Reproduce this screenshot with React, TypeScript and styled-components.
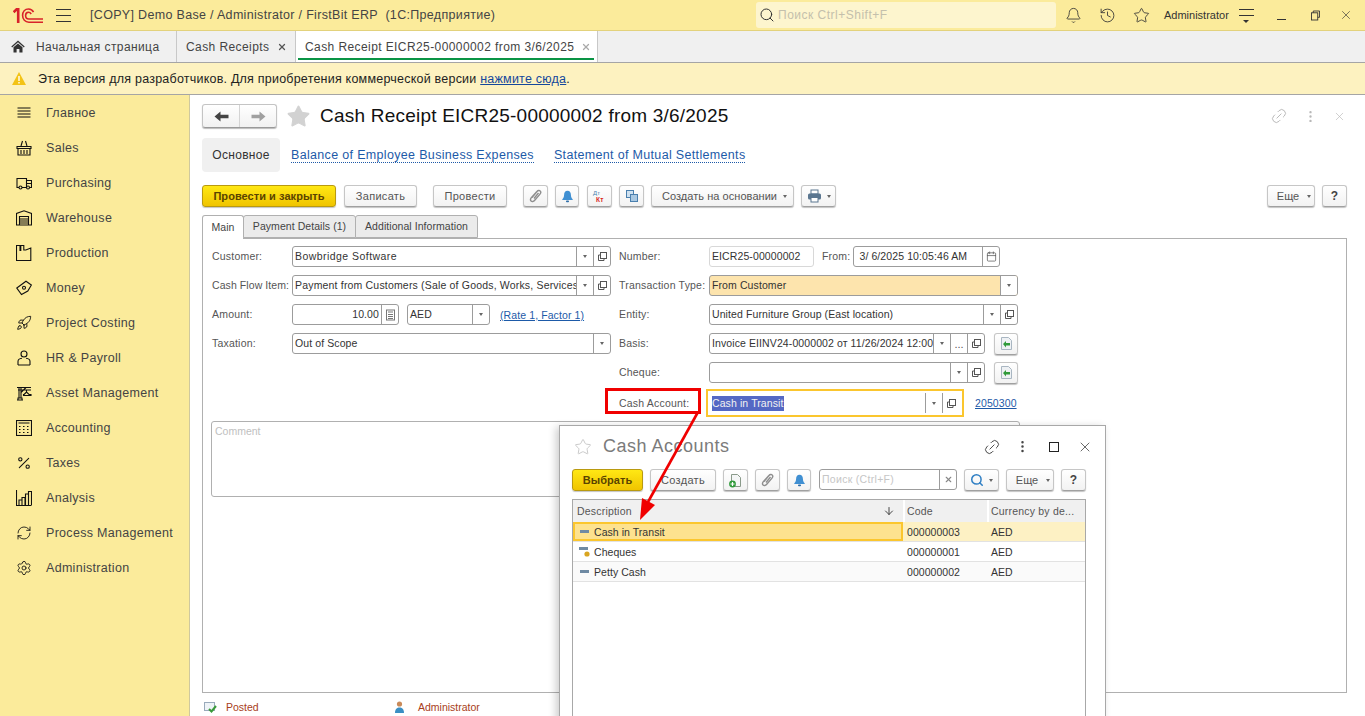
import React from "react";
import styled, { createGlobalStyle } from "styled-components";
import { Rocket, Settings, RefreshCw, Percent, Bell, History, Star, Link2, Search, X, MoreVertical, ArrowDown, Calendar } from "lucide-react";

const GlobalStyle = createGlobalStyle`
  html, body {
    margin: 0;
    padding: 0;
    height: 100%;
    overflow: hidden;
    background: #fff;
  }
  * { box-sizing: border-box; }
`;

const Page = styled.div`
  position: relative;
  width: 1365px;
  height: 716px;
  overflow: hidden;
  font-family: "Liberation Sans", Arial, sans-serif;
  font-size: 11px;
  color: #444;
  display: flex;
  flex-direction: column;
`;

/* top bar */
const TopBar = styled.div`
  height: 31px;
  flex: none;
  background: #fbeb9b;
  border-bottom: 1px solid #e3d27c;
  display: flex;
  align-items: center;
`;
const LogoWrap = styled.div`
  margin-left: 13px;
  width: 30px;
  height: 15px;
  display: flex;
`;
const Burger = styled.div`
  margin-left: 13px;
  width: 15px;
  height: 13px;
  border-top: 1px solid #333;
  border-bottom: 1px solid #333;
  position: relative;
  &::after {
    content: "";
    position: absolute;
    left: 0;
    right: 0;
    top: 5px;
    height: 1px;
    background: #333;
  }
`;
const AppTitle = styled.div`
  margin-left: 19px;
  width: 666px;
  font-size: 12.5px;
  letter-spacing: 0.32px;
  color: #444;
  white-space: pre;
`;
const SearchBox = styled.div`
  width: 300px;
  height: 26px;
  background: #fdf5ce;
  border-radius: 3px;
  display: flex;
  align-items: center;
  padding-left: 3px;
  color: #c4c0ac;
  font-size: 12px;
  letter-spacing: 0.5px;
  gap: 3px;
`;
const TopTool = styled.div`
  width: 34px;
  display: flex;
  justify-content: center;
  color: #333;
  &:first-of-type { margin-left: 2px; }
`;
const TopUser = styled.div`
  margin-left: 4px;
  width: 64px;
  padding-left: 2px;
  font-size: 11px;
  color: #333;
  white-space: nowrap;
`;
const MenuLines = styled.div`
  margin-left: 13px;
  width: 15px;
  height: 13px;
  border-top: 1px solid #333;
  position: relative;
  &::before {
    content: "";
    position: absolute;
    left: 0;
    right: 0;
    top: 5px;
    height: 1px;
    background: #333;
  }
  &::after {
    content: "";
    position: absolute;
    left: 4px;
    top: 10px;
    border-left: 3px solid transparent;
    border-right: 3px solid transparent;
    border-top: 3px solid #333;
  }
`;
const WinMin = styled.div`
  margin-left: 23px;
  width: 9px;
  height: 8px;
  margin-top: 1px;
  border-bottom: 1px solid #333;
`;
const WinRestore = styled.div`
  margin-left: 25px;
  width: 9px;
  display: flex;
`;
const WinClose = styled.div`
  margin-left: 19px;
  display: flex;
  color: #333;
`;

/* open windows */
const TabStrip = styled.div`
  height: 32px;
  flex: none;
  background: #f0f0f0;
  border-bottom: 1px solid #a5a5a5;
  display: flex;
`;
const WinTab = styled.div<{ $w: number; $pl: number; $active?: boolean }>`
  position: relative;
  width: ${(p) => p.$w}px;
  padding-left: ${(p) => p.$pl}px;
  background: ${(p) => (p.$active ? "#fff" : "#f0f0f0")};
  border-right: 1px solid #c8c8c8;
  display: flex;
  align-items: center;
  font-size: 12px;
  letter-spacing: 0.41px;
  color: #444;
  white-space: nowrap;
  &::after {
    content: "";
    display: ${(p) => (p.$active ? "block" : "none")};
    position: absolute;
    left: 2px;
    right: 3px;
    bottom: 2px;
    height: 2px;
    background: #0a9445;
  }
`;
const TabHome = styled.span`
  display: flex;
  margin-right: 11px;
  margin-left: -1px;
`;
const TabClose = styled.span<{ $dim?: boolean }>`
  position: absolute;
  right: ${(p) => (p.$dim ? 6 : 8)}px;
  top: 11px;
  display: flex;
  color: ${(p) => (p.$dim ? "#aaa" : "#555")};
`;

const Notice = styled.div`
  height: 32px;
  flex: none;
  background: #fdf2c0;
  border-bottom: 1px solid #a5a5a5;
  display: flex;
  align-items: center;
  padding-left: 12px;
  font-size: 12.5px;
  letter-spacing: 0.22px;
  color: #222;
`;
const NoticeText = styled.span`
  margin-left: 12px;
`;
const NoticeLink = styled.a`
  color: #14489c;
  text-decoration: underline;
`;

const Body = styled.div`
  flex: 1;
  display: flex;
  min-height: 0;
`;

/* sections */
const Sidebar = styled.div`
  width: 190px;
  flex: none;
  background: #fbeb9b;
  border-right: 1px solid #cfc89e;
`;
const SideItem = styled.div`
  height: 35px;
  display: flex;
  align-items: center;
  padding-left: 16px;
  gap: 14px;
  font-size: 12.5px;
  letter-spacing: 0.3px;
  color: #444;
  white-space: nowrap;
`;
const SideIcon = styled.span`
  width: 16px;
  height: 16px;
  display: flex;
  color: #111;
`;

/* document form */
const Content = styled.div`
  flex: 1;
  padding: 9px 18px 0 12px;
  min-width: 0;
`;
const Header = styled.div`
  height: 24px;
  display: flex;
  align-items: center;
`;
const ArrowGroup = styled.div`
  width: 75px;
  height: 24px;
  display: flex;
  border: 1px solid #c4c4c4;
  border-bottom-color: #999;
  border-radius: 3px;
  background: linear-gradient(#fff, #f1f1f1);
  box-shadow: 0 1px 1px #bbb;
`;
const ArrowCell = styled.div<{ $dim?: boolean }>`
  flex: 1;
  display: flex;
  align-items: center;
  justify-content: center;
  color: ${(p) => (p.$dim ? "#a0a0a0" : "#444")};
  & + & { border-left: 1px solid #d4d4d4; }
`;
const HeadStar = styled.span`
  margin-left: 9px;
  display: flex;
  color: #d2d2d2;
`;
const DocTitle = styled.div`
  margin-left: 9px;
  font-size: 19px;
  letter-spacing: 0.22px;
  color: #111;
  white-space: nowrap;
`;
const HeadRight = styled.div`
  margin-left: auto;
  margin-right: 1px;
  display: flex;
  align-items: center;
  gap: 15px;
  color: #b8b8b8;
`;

const LinksRow = styled.div`
  margin-top: 10px;
  height: 34px;
  display: flex;
  align-items: center;
`;
const CurrentLink = styled.div`
  width: 78px;
  height: 34px;
  background: #f0f0f0;
  border-radius: 4px;
  display: flex;
  align-items: center;
  justify-content: center;
  font-size: 12px;
  letter-spacing: 0.3px;
  color: #333;
`;
const FormLink = styled.a<{ $ml: number }>`
  margin-left: ${(p) => p.$ml}px;
  margin-top: 1px;
  font-size: 12.5px;
  letter-spacing: 0.33px;
  color: #1d5aa8;
  text-decoration: none;
  border-bottom: 1px dotted #1d5aa8;
  line-height: 14px;
`;

const Toolbar = styled.div`
  margin-top: 13px;
  height: 22px;
  display: flex;
`;
const Btn = styled.div<{ $w: number; $ml?: number }>`
  width: ${(p) => p.$w}px;
  height: 22px;
  margin-left: ${(p) => p.$ml ?? 0}px;
  flex: none;
  border: 1px solid #c6c6c6;
  border-bottom-color: #a0a0a0;
  border-radius: 3px;
  background: linear-gradient(#fff, #f2f2f2);
  box-shadow: 0 1px 1px #c4c4c4;
  display: flex;
  align-items: center;
  justify-content: center;
  gap: 5px;
  font-size: 11px;
  letter-spacing: 0.3px;
  color: #555;
  white-space: nowrap;
`;
const PrimaryBtn = styled(Btn)`
  background: linear-gradient(#ffe814, #f0c400);
  border-color: #b99a10;
  color: #5a4400;
  font-weight: bold;
  letter-spacing: 0.05px;
`;
const HelpBtn = styled(Btn)`
  font-weight: bold;
  color: #444;
  font-size: 12px;
`;
const CreateBtn = styled(Btn)`
  letter-spacing: 0.05px;
  gap: 6px;
  padding-left: 4px;
`;
const MoreBtn = styled(Btn)`
  padding-left: 6px;
  gap: 8px;
  letter-spacing: 0;
`;
const BtnCaret = styled.span`
  width: 0;
  height: 0;
  border-left: 2.5px solid transparent;
  border-right: 2.5px solid transparent;
  border-top: 3px solid #666;
`;
const PushRight = styled.div`
  margin-left: auto;
  display: flex;
  gap: 7px;
`;

const TabsRow = styled.div`
  margin-top: 8px;
  height: 24px;
  display: flex;
  position: relative;
  z-index: 1;
`;
const FormTab = styled.div<{ $w: number; $active?: boolean }>`
  width: ${(p) => p.$w}px;
  height: ${(p) => (p.$active ? 24 : 23)}px;
  margin-right: -1px;
  padding-bottom: ${(p) => (p.$active ? 2 : 1)}px;
  background: ${(p) => (p.$active ? "#fff" : "#ebebeb")};
  border: 1px solid #b0b0b0;
  border-bottom: ${(p) => (p.$active ? "none" : "1px solid #b0b0b0")};
  border-radius: 3px 3px 0 0;
  display: flex;
  align-items: center;
  justify-content: center;
  font-size: 10.5px;
  letter-spacing: 0.06px;
  color: #444;
  white-space: nowrap;
`;
const Frame = styled.div`
  margin-top: -1px;
  height: 455px;
  border: 1px solid #b0b0b0;
  padding: 7px 0 0 9px;
`;
const Columns = styled.div`
  display: flex;
  gap: 8px;
`;
const Column = styled.div`
  width: 399px;
  display: flex;
  flex-direction: column;
  gap: 8px;
`;
const Row = styled.div`
  height: 21px;
  display: flex;
  align-items: center;
`;
const HighlightRow = styled(Row)`
  height: 28px;
  margin-top: -2px;
`;
const Label = styled.div<{ $w: number; $ls?: number }>`
  width: ${(p) => p.$w}px;
  flex: none;
  padding-bottom: 1px;
  font-size: 10.5px;
  letter-spacing: ${(p) => p.$ls ?? 0.2}px;
  color: #555;
  white-space: nowrap;
`;
const InlineLabel = styled.span`
  margin: 0 3px 0 8px;
  padding-bottom: 1px;
  font-size: 10.5px;
  letter-spacing: 0.2px;
  color: #555;
`;
const Field = styled.div<{ $w: number; $ml?: number; $bg?: string; $light?: boolean }>`
  width: ${(p) => p.$w}px;
  height: 21px;
  margin-left: ${(p) => p.$ml ?? 0}px;
  flex: none;
  display: flex;
  background: ${(p) => p.$bg ?? "#fff"};
  border: 1px solid ${(p) => (p.$light ? "#d8d8d8" : "#9c9c9c")};
  border-radius: 3px;
  overflow: hidden;
`;
const FieldValue = styled.div<{ $right?: boolean; $ls?: number }>`
  flex: 1;
  min-width: 0;
  padding: 0 2px;
  line-height: 19px;
  font-size: 10.5px;
  letter-spacing: ${(p) => p.$ls ?? 0.1}px;
  color: #333;
  white-space: nowrap;
  overflow: hidden;
  text-align: ${(p) => (p.$right ? "right" : "left")};
`;
const FieldBtn = styled.div<{ $bg?: string }>`
  width: 17px;
  flex: none;
  border-left: 1px solid #9c9c9c;
  background: ${(p) => p.$bg ?? "transparent"};
  display: flex;
  align-items: center;
  justify-content: center;
  color: #555;
`;
const FocusField = styled.div`
  width: 258px;
  height: 28px;
  margin-left: -3px;
  flex: none;
  display: flex;
  align-items: center;
  border: 2px solid #fbc62e;
  padding: 2px 3px 2px 4px;
`;
const Selected = styled.span`
  background: #5468c4;
  color: #f2f2f2;
  line-height: 15px;
  font-size: 10.5px;
  letter-spacing: 0.1px;
`;
const FocusBtns = styled.div`
  margin-left: auto;
  height: 20px;
  display: flex;
`;
const PlainLink = styled.a<{ $ml: number }>`
  margin-left: ${(p) => p.$ml}px;
  font-size: 10.5px;
  letter-spacing: 0.1px;
  color: #1d5aa8;
  text-decoration: underline;
  white-space: nowrap;
`;
const Comment = styled.div`
  margin-top: 4px;
  margin-left: -1px;
  width: 809px;
  height: 76px;
  border: 1px solid #b0b0b0;
  border-radius: 3px;
  padding: 3px;
  font-size: 10.5px;
  color: #c0c0c0;
`;
const StatusBar = styled.div`
  margin-top: 5px;
  height: 18px;
  display: flex;
  align-items: center;
  padding-left: 2px;
  font-size: 10.5px;
  color: #a8401a;
`;
const StatusItem = styled.div<{ $w: number; $gap: number }>`
  width: ${(p) => p.$w}px;
  display: flex;
  align-items: center;
  gap: ${(p) => p.$gap}px;
`;

/* choice window */
const Popup = styled.div`
  position: absolute;
  left: 559px;
  top: 425px;
  width: 547px;
  height: 300px;
  background: #fff;
  border: 1px solid #a8a8a8;
  box-shadow: -3px 2px 8px rgba(0, 0, 0, 0.2);
  padding: 0 19px 0 12px;
`;
const PopupHead = styled.div`
  height: 43px;
  display: flex;
  align-items: center;
  padding-bottom: 2px;
`;
const PopupStar = styled.span`
  margin-left: 2px;
  display: flex;
  color: #c4c4c4;
`;
const PopupTitle = styled.div`
  margin-left: 11px;
  font-size: 18px;
  letter-spacing: 0.5px;
  color: #7b7b7b;
`;
const PopupTools = styled.div`
  margin-left: auto;
  margin-right: -14px;
  display: flex;
  align-items: center;
  color: #444;
`;
const PopupTool = styled.span`
  width: 31px;
  display: flex;
  justify-content: center;
`;
const MaxBox = styled.span`
  width: 10px;
  height: 10px;
  border: 1.5px solid #222;
`;
const PopupBar = styled.div`
  height: 22px;
  display: flex;
`;
const Placeholder = styled.div`
  flex: 1;
  padding: 0 2px;
  line-height: 19px;
  font-size: 10.5px;
  letter-spacing: 0.3px;
  color: #c6c6c6;
`;
const Grid = styled.div`
  margin-top: 8px;
  width: 514px;
  height: 230px;
  border: 1px solid #a8a8a8;
`;
const GridRow = styled.div<{ $h: number; $bg?: string; $line?: boolean }>`
  height: ${(p) => p.$h}px;
  display: grid;
  grid-template-columns: 330px 84px 1fr;
  background: ${(p) => p.$bg ?? "#fff"};
  border-bottom: ${(p) => (p.$line ? "1px solid #e2e2e2" : "none")};
`;
const HeadCell = styled.div`
  padding: 0 8px 1px 4px;
  display: flex;
  align-items: center;
  justify-content: space-between;
  font-size: 10.5px;
  letter-spacing: 0.2px;
  color: #555;
  white-space: nowrap;
  background: #f0f0f0;
  & + & {
    border-left: 2px solid #fff;
    padding-left: 2px;
  }
`;
const Cell = styled.div<{ $first?: boolean; $focus?: boolean }>`
  display: flex;
  align-items: center;
  gap: 4px;
  padding-left: ${(p) => (p.$focus ? 4 : p.$first ? 6 : 4)}px;
  font-size: 10.5px;
  letter-spacing: 0.05px;
  color: #333;
  white-space: nowrap;
  border: ${(p) => (p.$focus ? "2px solid #fbc62e" : "none")};
  background: ${(p) => (p.$focus ? "#fde28f" : "transparent")};
`;

/* annotations drawn over the screenshot */
const RedBox = styled.div`
  position: absolute;
  left: 605px;
  top: 388px;
  width: 96px;
  height: 26px;
  border: 3px solid #f00000;
`;
const ArrowOverlay = styled.svg`
  position: absolute;
  left: 630px;
  top: 410px;
  pointer-events: none;
`;

const Caret = () => <BtnCaret />;
const OpenIcon = () => (
  <svg width="11" height="11" viewBox="0 0 11 11" fill="none" stroke="#555" strokeWidth="1">
    <rect x="3.5" y="1.5" width="6" height="6" />
    <path d="M3.5 4H1.5v5.5H7V7.5" />
  </svg>
);
const Logo = () => (
  <svg width="30" height="15" viewBox="0 0 30 15" fill="none" stroke="#d8232a">
    <path d="M.6 4.2L3.6 1.4h1.6V15" strokeWidth="2.6" />
    <path d="M20.5 4.2C19.5 2 17.5 1 15.5 1 12 1 9.6 3.8 9.6 7.6s2.6 6.6 6.2 6.6H30" strokeWidth="1.6" />
    <path d="M18.2 6C17.5 4.8 16.6 4.2 15.5 4.2c-1.8 0-2.9 1.6-2.9 3.4s1.2 3.4 3.2 3.4H30" strokeWidth="1.6" />
  </svg>
);
const LineIcon = ({ children }: { children: React.ReactNode }) => (
  <svg width="16" height="16" viewBox="0 0 16 16" fill="none" stroke="currentColor" strokeWidth="1.1">
    {children}
  </svg>
);
const navItems: { label: string; icon: React.ReactNode }[] = [
  { label: "Главное", icon: <LineIcon><path d="M1.5 3h13M1.5 6h13M1.5 9h13M1.5 12h13" /></LineIcon> },
  { label: "Sales", icon: <LineIcon><path d="M.5 6.5h15M1 6.5v2h14v-2M2 8.5v6.5h12V8.5M5 10v4M8 10v4M11 10v4M5 6l1.5-5M11 6L9.5 1" /></LineIcon> },
  { label: "Purchasing", icon: <LineIcon><path d="M3 12.5H1V3.5h9.5v9H6M10.5 5.5h5v7h-2M10.5 8.5h5" /><circle cx="4.5" cy="12.5" r="1.5" /><circle cx="12" cy="12.5" r="1.5" /></LineIcon> },
  { label: "Warehouse", icon: <LineIcon><path d="M.5 15V3.5L8 .8l7.5 2.7V15zM3.5 15V6.5h9V15M3.5 9h9M3.5 11h9M3.5 13h9" /></LineIcon> },
  { label: "Production", icon: <LineIcon><path d="M.5 15.5V.5h3.5v5h.8V.5h3v4.5h2l5-2v12.5z" /></LineIcon> },
  { label: "Money", icon: <LineIcon><path d="M.8 8L10 1.2 15.4 5 11.8 11 5.5 14.6z" /><circle cx="8" cy="7.8" r="1.5" /></LineIcon> },
  { label: "Project Costing", icon: <Rocket size={16} strokeWidth={1.4} /> },
  { label: "HR & Payroll", icon: <LineIcon><circle cx="8" cy="4" r="3" /><path d="M2 15v-3.5c0-2 1.8-3 4-3.2M14 15v-3.5c0-2-1.8-3-4-3.2M2 15h12" /></LineIcon> },
  { label: "Asset Management", icon: <LineIcon><path d="M1 15h6M2 15v-2h4v2M3 13V2.5M5 13V2.5M1 2.5h14M2 5h13M5 7.5l5-5M10.5 5v2M8 9.5l2.5-2.5 2.5 2.5h2v1H7.5v-1z" /></LineIcon> },
  { label: "Accounting", icon: <LineIcon><rect x=".5" y=".5" width="15" height="15" /><path d="M2.5 3h11M3 6.5h1.5M7 6.5h1.5M11 6.5h1.5M3 9.5h1.5M7 9.5h1.5M11 9.5h1.5M3 12.5h1.5M7 12.5h1.5M11 12.5h1.5" /></LineIcon> },
  { label: "Taxes", icon: <Percent size={16} strokeWidth={1.6} /> },
  { label: "Analysis", icon: <LineIcon><path d="M.5 0v15.5h15M3 15v-5h3v5M6 15V7.5h3V15M9.5 15V4h3v11M12.5 15V1.5h3V15" /></LineIcon> },
  { label: "Process Management", icon: <RefreshCw size={16} strokeWidth={1.3} /> },
  { label: "Administration", icon: <Settings size={16} strokeWidth={1.3} /> },
];

const HomeIcon = () => (
  <svg width="14" height="13" viewBox="0 0 14 13" fill="#333">
    <path d="M7 .5L.3 6.6l.8.9L7 2.3l5.9 5.2.8-.9z" />
    <path d="M2.5 7.3L7 3.4l4.5 3.9V12.5H8.4V9H5.6v3.5H2.5z" />
  </svg>
);
const SolidArrow = ({ flip }: { flip?: boolean }) => (
  <svg width="15" height="11" viewBox="0 0 15 11" fill="currentColor" style={flip ? { transform: "scaleX(-1)" } : undefined}>
    <path d="M.5 5.5L6.5.5v3.3h8v3.4h-8v3.3z" />
  </svg>
);
const RestoreIcon = () => (
  <svg width="10" height="11" viewBox="0 0 10 11" fill="none" stroke="#333">
    <path d="M2.5 2.5V.5h7v7h-2" />
    <rect x=".5" y="2.5" width="7" height="8" />
  </svg>
);
const LinkIcon = ({ size }: { size: number }) => (
  <Link2 size={size} strokeWidth={1.2} style={{ transform: "rotate(-45deg)" }} />
);
const BlueBell = () => (
  <svg width="13" height="13" viewBox="0 0 13 13">
    <path d="M6.5 0.8c2.4 0 3.4 1.8 3.4 4 0 2.4.8 3.4 1.8 4.4v.8H1.3v-.8c1-1 1.8-2 1.8-4.4 0-2.2 1-4 3.4-4z" fill="#3f8fd2" />
    <rect x="5" y="10.5" width="3" height="1.8" rx=".8" fill="#2f6ea8" />
  </svg>
);
const GreyClip = () => (
  <svg width="13" height="14" viewBox="0 0 13 14" fill="none" stroke="#8e8e8e" strokeWidth="1.4">
    <path d="M3 8.5L8 2.5c1-1.2 2.6-1.2 3.3-.4s.6 2-.3 3L5.5 11.5c-1 1.2-2.6 1.4-3.4.6s-.7-2.2.2-3.4L7.5 3" />
    <path d="M5 9.5L9.5 4" />
  </svg>
);
const GreenDoc = () => (
  <svg width="15" height="15" viewBox="0 0 15 15">
    <path d="M2.5 1.5h7l3 3v9h-10z" fill="#eef1f4" stroke="#a9b6c2" />
    <path d="M4 8l3-3v2h4v2.4H7v2z" fill="#2f9a3a" />
  </svg>
);
const NewDoc = () => (
  <svg width="15" height="15" viewBox="0 0 15 15">
    <path d="M3.5 1.5h6l3 3v9h-9z" fill="#f4f6f6" stroke="#8a9a8a" />
    <circle cx="4.5" cy="11" r="3.4" fill="#2f9a3a" />
    <path d="M4.5 9v4M2.5 11h4" stroke="#fff" strokeWidth="1.2" />
  </svg>
);
const Dash = () => (
  <svg width="11" height="7" viewBox="0 0 11 7"><rect x="1" y="2" width="9" height="3" fill="#6f8aa3" /></svg>
);
const DashCoin = () => (
  <svg width="11" height="12" viewBox="0 0 11 12">
    <rect x="0" y="1" width="9" height="3" fill="#6f8aa3" />
    <circle cx="8" cy="8" r="2.6" fill="#d9a520" />
  </svg>
);

export default function App() {
  return (
    <Page>
      <GlobalStyle />
      <TopBar>
        <LogoWrap><Logo /></LogoWrap>
        <Burger />
        <AppTitle>[COPY] Demo Base / Administrator / FirstBit ERP  (1С:Предприятие)</AppTitle>
        <SearchBox><Search size={16} color="#333" strokeWidth={1.5} />Поиск Ctrl+Shift+F</SearchBox>
        <TopTool><Bell size={17} strokeWidth={1.2} /></TopTool>
        <TopTool><History size={17} strokeWidth={1.2} /></TopTool>
        <TopTool><Star size={17} strokeWidth={1.2} /></TopTool>
        <TopUser>Administrator</TopUser>
        <MenuLines />
        <WinMin />
        <WinRestore><RestoreIcon /></WinRestore>
        <WinClose><X size={14} strokeWidth={1.1} /></WinClose>
      </TopBar>

      <TabStrip>
        <WinTab $w={177} $pl={12}>
          <TabHome><HomeIcon /></TabHome>
          Начальная страница
        </WinTab>
        <WinTab $w={119} $pl={9}>
          Cash Receipts
          <TabClose><X size={10} strokeWidth={3} /></TabClose>
        </WinTab>
        <WinTab $w={302} $pl={9} $active>
          Cash Receipt EICR25-00000002 from 3/6/2025
          <TabClose $dim><X size={10} strokeWidth={3} /></TabClose>
        </WinTab>
      </TabStrip>

      <Notice>
        <svg width="14" height="13" viewBox="0 0 14 13"><path d="M7 0l7 13H0z" fill="#f3c316" /><rect x="6.3" y="4" width="1.4" height="5" fill="#fff" /><rect x="6.3" y="10" width="1.4" height="1.5" fill="#fff" /></svg>
        <NoticeText>Эта версия для разработчиков. Для приобретения коммерческой версии <NoticeLink>нажмите сюда</NoticeLink>.</NoticeText>
      </Notice>

      <Body>
        <Sidebar>
          {navItems.map((item) => (
            <SideItem key={item.label}>
              <SideIcon>{item.icon}</SideIcon>
              {item.label}
            </SideItem>
          ))}
        </Sidebar>

        <Content>
          <Header>
            <ArrowGroup>
              <ArrowCell><SolidArrow /></ArrowCell>
              <ArrowCell $dim><SolidArrow flip /></ArrowCell>
            </ArrowGroup>
            <HeadStar><Star size={25} fill="#d2d2d2" strokeWidth={1} /></HeadStar>
            <DocTitle>Cash Receipt EICR25-00000002 from 3/6/2025</DocTitle>
            <HeadRight>
              <LinkIcon size={18} />
              <MoreVertical size={15} strokeWidth={1.8} />
              <X size={13} strokeWidth={1.2} />
            </HeadRight>
          </Header>

          <LinksRow>
            <CurrentLink>Основное</CurrentLink>
            <FormLink $ml={11}>Balance of Employee Business Expenses</FormLink>
            <FormLink $ml={20}>Statement of Mutual Settlements</FormLink>
          </LinksRow>

          <Toolbar>
            <PrimaryBtn $w={134}>Провести и закрыть</PrimaryBtn>
            <Btn $w={73} $ml={8}>Записать</Btn>
            <Btn $w={74} $ml={16}>Провести</Btn>
            <Btn $w={25} $ml={16}><GreyClip /></Btn>
            <Btn $w={24} $ml={7}><BlueBell /></Btn>
            <Btn $w={25} $ml={8}>
              <svg width="15" height="14" viewBox="0 0 15 14">
                <text x="1" y="6" fontSize="6" fontFamily="Liberation Sans" fill="#4a7fae">Дт</text>
                <text x="4" y="13" fontSize="6.5" fontWeight="bold" fontFamily="Liberation Sans" fill="#d9261c">Кт</text>
              </svg>
            </Btn>
            <Btn $w={25} $ml={7}>
              <svg width="14" height="14" viewBox="0 0 14 14" fill="none" stroke="#4a7fae">
                <rect x="1.5" y="1.5" width="7" height="7" fill="#cfe1f0" />
                <rect x="5.5" y="5.5" width="7" height="7" fill="#a9c8e2" />
              </svg>
            </Btn>
            <CreateBtn $w={143} $ml={7}>Создать на основании <Caret /></CreateBtn>
            <Btn $w={35} $ml={7}>
              <svg width="15" height="14" viewBox="0 0 15 14">
                <rect x="4" y="1" width="7" height="4" fill="#fff" stroke="#5a7690" />
                <rect x="1" y="4.5" width="13" height="6" rx="1.5" fill="#5a7690" />
                <rect x="4" y="8.5" width="7" height="4.5" fill="#fff" stroke="#5a7690" />
              </svg>
              <Caret />
            </Btn>
            <PushRight>
              <MoreBtn $w={48}>Еще <Caret /></MoreBtn>
              <HelpBtn $w={25}>?</HelpBtn>
            </PushRight>
          </Toolbar>

          <TabsRow>
            <FormTab $w={42} $active>Main</FormTab>
            <FormTab $w={113}>Payment Details (1)</FormTab>
            <FormTab $w={123}>Additional Information</FormTab>
          </TabsRow>

          <Frame>
            <Columns>
              <Column>
                <Row>
                  <Label $w={80}>Customer:</Label>
                  <Field $w={319}>
                    <FieldValue $ls={0.45}>Bowbridge Software</FieldValue>
                    <FieldBtn><Caret /></FieldBtn>
                    <FieldBtn><OpenIcon /></FieldBtn>
                  </Field>
                </Row>
                <Row>
                  <Label $w={80} $ls={0.08}>Cash Flow Item:</Label>
                  <Field $w={319}>
                    <FieldValue $ls={0.18}>Payment from Customers (Sale of Goods, Works, Services)</FieldValue>
                    <FieldBtn><Caret /></FieldBtn>
                    <FieldBtn><OpenIcon /></FieldBtn>
                  </Field>
                </Row>
                <Row>
                  <Label $w={80}>Amount:</Label>
                  <Field $w={107}>
                    <FieldValue $right>10.00</FieldValue>
                    <FieldBtn>
                      <svg width="11" height="12" viewBox="0 0 11 12" fill="none" stroke="#777">
                        <rect x="1.5" y="1" width="8" height="10" />
                        <path d="M3 3h5M3 5.5h5M3 7.5h5M3 9.5h5" />
                      </svg>
                    </FieldBtn>
                  </Field>
                  <Field $w={83} $ml={8}>
                    <FieldValue>AED</FieldValue>
                    <FieldBtn><Caret /></FieldBtn>
                  </Field>
                  <PlainLink $ml={10}>(Rate 1, Factor 1)</PlainLink>
                </Row>
                <Row>
                  <Label $w={80}>Taxation:</Label>
                  <Field $w={319}>
                    <FieldValue>Out of Scope</FieldValue>
                    <FieldBtn><Caret /></FieldBtn>
                  </Field>
                </Row>
              </Column>

              <Column>
                <Row>
                  <Label $w={90}>Number:</Label>
                  <Field $w={105} $light>
                    <FieldValue>EICR25-00000002</FieldValue>
                  </Field>
                  <InlineLabel>From:</InlineLabel>
                  <Field $w={147}>
                    <FieldValue>&nbsp;3/ 6/2025 10:05:46 AM</FieldValue>
                    <FieldBtn><Calendar size={11} strokeWidth={1.6} /></FieldBtn>
                  </Field>
                </Row>
                <Row>
                  <Label $w={90}>Transaction Type:</Label>
                  <Field $w={309} $bg="#fde4ad">
                    <FieldValue>From Customer</FieldValue>
                    <FieldBtn $bg="#fff"><Caret /></FieldBtn>
                  </Field>
                </Row>
                <Row>
                  <Label $w={90}>Entity:</Label>
                  <Field $w={309}>
                    <FieldValue>United Furniture Group (East location)</FieldValue>
                    <FieldBtn><Caret /></FieldBtn>
                    <FieldBtn><OpenIcon /></FieldBtn>
                  </Field>
                </Row>
                <Row>
                  <Label $w={90}>Basis:</Label>
                  <Field $w={276}>
                    <FieldValue>Invoice EIINV24-0000002 от 11/26/2024 12:00</FieldValue>
                    <FieldBtn><Caret /></FieldBtn>
                    <FieldBtn>...</FieldBtn>
                    <FieldBtn><OpenIcon /></FieldBtn>
                  </Field>
                  <Btn $w={24} $ml={9}><GreenDoc /></Btn>
                </Row>
                <Row>
                  <Label $w={90}>Cheque:</Label>
                  <Field $w={276}>
                    <FieldValue />
                    <FieldBtn><Caret /></FieldBtn>
                    <FieldBtn><OpenIcon /></FieldBtn>
                  </Field>
                  <Btn $w={24} $ml={9}><GreenDoc /></Btn>
                </Row>
                <HighlightRow>
                  <Label $w={90}>Cash Account:</Label>
                  <FocusField>
                    <Selected>Cash in Transit</Selected>
                    <FocusBtns>
                      <FieldBtn><Caret /></FieldBtn>
                      <FieldBtn><OpenIcon /></FieldBtn>
                    </FocusBtns>
                  </FocusField>
                  <PlainLink $ml={11}>2050300</PlainLink>
                </HighlightRow>
              </Column>
            </Columns>
            <Comment>Comment</Comment>
          </Frame>

          <StatusBar>
            <StatusItem $w={191} $gap={9}>
              <svg width="13" height="12" viewBox="0 0 13 12">
                <rect x="0.5" y="1.5" width="10" height="8" fill="#eef3f7" stroke="#9ab" />
                <path d="M5 8l2.5 2.5L12 5" fill="none" stroke="#3a9a3a" strokeWidth="2" />
              </svg>
              Posted
            </StatusItem>
            <StatusItem $w={150} $gap={14}>
              <svg width="9" height="12" viewBox="0 0 9 12">
                <circle cx="4.5" cy="3" r="2.6" fill="#c98a5a" />
                <path d="M0 12c0-4 2-5.5 4.5-5.5S9 8 9 12z" fill="#3a8fc4" />
              </svg>
              Administrator
            </StatusItem>
          </StatusBar>
        </Content>
      </Body>

      <Popup>
        <PopupHead>
          <PopupStar><Star size={18} strokeWidth={1.2} /></PopupStar>
          <PopupTitle>Cash Accounts</PopupTitle>
          <PopupTools>
            <PopupTool><LinkIcon size={18} /></PopupTool>
            <PopupTool><MoreVertical size={15} strokeWidth={2} /></PopupTool>
            <PopupTool><MaxBox /></PopupTool>
            <PopupTool><X size={16} strokeWidth={1.2} /></PopupTool>
          </PopupTools>
        </PopupHead>
        <PopupBar>
          <PrimaryBtn $w={71}>Выбрать</PrimaryBtn>
          <Btn $w={66} $ml={7}>Создать</Btn>
          <Btn $w={25} $ml={7}><NewDoc /></Btn>
          <Btn $w={25} $ml={7}><GreyClip /></Btn>
          <Btn $w={24} $ml={7}><BlueBell /></Btn>
          <Field $w={138} $ml={8}>
            <Placeholder>Поиск (Ctrl+F)</Placeholder>
            <FieldBtn><X size={9} strokeWidth={3} color="#888" /></FieldBtn>
          </Field>
          <Btn $w={35} $ml={7}><Search size={14} color="#2f7fc4" strokeWidth={2.6} /><Caret /></Btn>
          <MoreBtn $w={48} $ml={7}>Еще <Caret /></MoreBtn>
          <HelpBtn $w={25} $ml={7}>?</HelpBtn>
        </PopupBar>
        <Grid>
          <GridRow $h={22}>
            <HeadCell>Description <ArrowDown size={12} strokeWidth={1.8} color="#333" /></HeadCell>
            <HeadCell>Code</HeadCell>
            <HeadCell>Currency by de...</HeadCell>
          </GridRow>
          <GridRow $h={20} $bg="#fdf1c4" $line>
            <Cell $first $focus><Dash />Cash in Transit</Cell>
            <Cell>000000003</Cell>
            <Cell>AED</Cell>
          </GridRow>
          <GridRow $h={20} $line>
            <Cell $first><DashCoin />Cheques</Cell>
            <Cell>000000001</Cell>
            <Cell>AED</Cell>
          </GridRow>
          <GridRow $h={20} $bg="#fafafa" $line>
            <Cell $first><Dash />Petty Cash</Cell>
            <Cell>000000002</Cell>
            <Cell>AED</Cell>
          </GridRow>
        </Grid>
      </Popup>

      <RedBox />
      <ArrowOverlay width="80" height="120" viewBox="0 0 80 120">
        <path d="M68 2L18 92" stroke="#f00000" strokeWidth="2.6" fill="none" />
        <path d="M10 110L12 88 25 95z" fill="#f00000" />
      </ArrowOverlay>
    </Page>
  );
}
